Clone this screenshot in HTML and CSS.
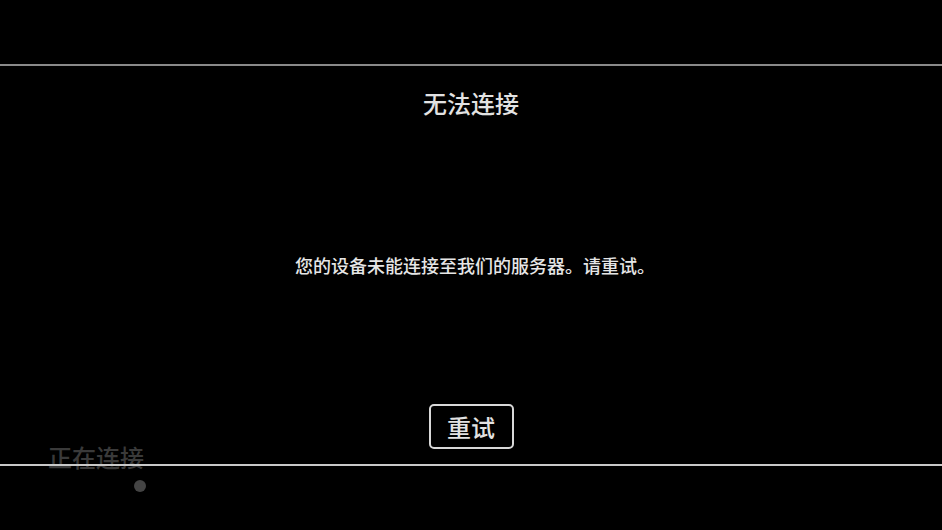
FILE: index.html
```html
<!DOCTYPE html>
<html lang="zh-CN">
<head>
<meta charset="utf-8">
<title>无法连接</title>
<link rel="stylesheet" href="styles.css">
</head>
<body>
<div class="screen">
  <div class="loading">
    <div class="loading-text">正在连接</div>
    <div class="loading-dot"></div>
  </div>
  <div class="dialog">
    <div class="dialog-title">无法连接</div>
    <div class="dialog-message">您的设备未能连接至我们的服务器。请重试。</div>
    <button class="retry-btn">重试</button>
  </div>
</div>
</body>
</html>
```
FILE: styles.css
```css
html, body {
  margin: 0;
  padding: 0;
  background: #000;
}
body {
  font-family: "Noto Sans CJK SC", "Noto Sans", sans-serif;
}
.screen {
  position: relative;
  width: 942px;
  height: 530px;
  overflow: hidden;
  background: #000;
}
.loading {
  padding: 440px 0 0 48px;
}
.loading-text {
  font-size: 24px;
  line-height: 34px;
  font-weight: 500;
  color: #3a3a3a;
}
.loading-dot {
  width: 12px;
  height: 12px;
  border-radius: 50%;
  background: #444;
  margin: 6px 0 0 86px;
}
.dialog {
  position: absolute;
  left: 0;
  right: 0;
  top: 64px;
  height: 398px;
  border-top: 2px solid #8a8a8a;
  border-bottom: 2px solid #c8c8c8;
  display: flex;
  flex-direction: column;
  align-items: center;
}
.dialog-title {
  margin-top: 21px;
  font-size: 24px;
  line-height: 32px;
  font-weight: 500;
  color: #e2e2e2;
}
.dialog-message {
  margin-top: 134px;
  padding-left: 8px;
  font-size: 18px;
  line-height: 24px;
  font-weight: 500;
  color: #e6e6e6;
}
.retry-btn {
  margin-top: 127px;
  width: 85px;
  height: 45px;
  box-sizing: border-box;
  border: 2px solid #d8d8d8;
  border-radius: 5px;
  background: #000;
  color: #e2e2e2;
  font-family: "Noto Sans CJK SC", "Noto Sans", sans-serif;
  font-size: 24px;
  font-weight: 500;
  line-height: 1;
  padding: 0;
}
```
